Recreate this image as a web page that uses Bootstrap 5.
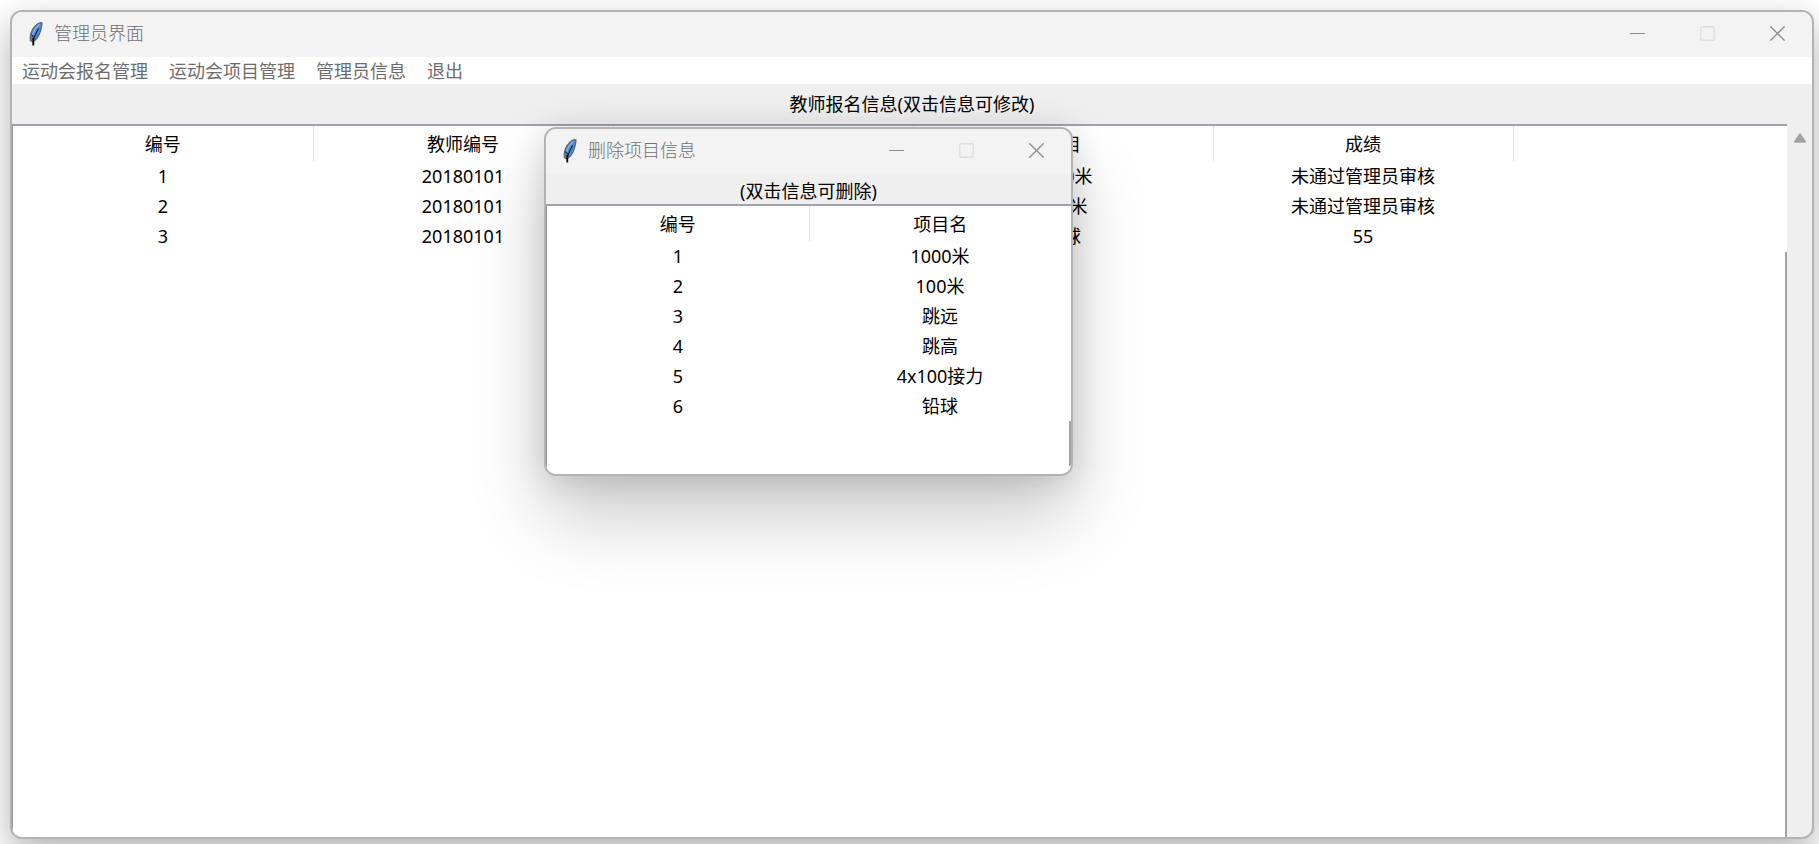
<!DOCTYPE html>
<html lang="zh-CN">
<head>
<meta charset="utf-8">
<meta name="viewport" content="width=device-width, initial-scale=1">
<title>管理员界面</title>
<link href="https://cdn.jsdelivr.net/npm/bootstrap@5.3.0/dist/css/bootstrap.min.css" rel="stylesheet">
<style>
  body {
    font-family: "Noto Sans", "Noto Sans CJK SC", sans-serif;
    font-size: 18px;
    line-height: 30px;
    color: #000;
    background: #fff;
  }
  .desktop { padding: 10px 5px 5px 10px; overflow: hidden; }
  .app-window {
    border: 2px solid #b3b3b3;
    border-radius: 12px;
    background: #efefef;
  }
  .main-window { box-shadow: 0 14px 36px rgba(0, 0, 0, .3); }
  .dialog-window {
    position: absolute;
    left: 544px;
    top: 127px;
    width: 529px;
    height: 349px;
    box-shadow: 0 42px 76px rgba(0, 0, 0, .2), 0 4px 32px rgba(0, 0, 0, .14);
  }
  .window-body { border-radius: 0 0 10px 10px; overflow: hidden; }
  .titlebar {
    height: 45px;
    padding: 0 0 2px 17px;
    background: #f3f3f3;
    border-radius: 10px 10px 0 0;
  }
  .window-title { font-size: 18px; line-height: 28px; font-weight: 300; color: #707070; margin-left: 11px; padding-bottom: 2px; }
  .caption-btn { width: 70px; height: 43px; border: 0; padding: 0; background: transparent; color: #8c8c8c; }
  .caption-btn:disabled { color: #dedede; }
  .caption-btn svg { display: block; margin: auto; }
  .menu-strip { height: 27px; padding: 0 10px; gap: 21px; background: #fff; }
  .menu-strip a { color: #6d6d6d; line-height: 28px; text-decoration: none; }
  .main-caption { height: 40px; line-height: 40px; }
  .dialog-caption { height: 30px; line-height: 35px; }
  .tree-view {
    border-top: 2px solid #a0a3aa;
    border-left: 1px solid #8f949c;
    background: #fff;
    position: relative;
  }
  .tree-edge { position: absolute; right: 0; bottom: 0; width: 2px; background: #a0a3aa; }
  .main-window .tree-edge { top: 126px; }
  .dialog-window .tree-edge { top: 215px; bottom: 8px; }
  .tree-view table { table-layout: fixed; width: 100%; text-align: center; }
  .tree-view th { height: 35px; padding: 0; font-weight: 400; border-right: 1px solid #e2e2e2; }
  .tree-view th:last-child { border-right: 0; }
  .tree-view td { height: 30px; padding: 0; line-height: 30px; }
  .field-col { width: 300px; }
  .scroll-strip { width: 25px; padding-top: 9px; }
  .scroll-strip button { border: 0; padding: 0; background: transparent; line-height: 0; }
</style>
<script src="https://cdn.jsdelivr.net/npm/bootstrap@5.3.0/dist/js/bootstrap.bundle.min.js"></script>
</head>
<body>
<svg class="d-none" aria-hidden="true">
  <symbol id="feather" viewBox="0 0 14 24">
    <path d="M11.500 .7C8 1.500 3.500 6 2 11c-.9 3-1 5.500-.6 7.500l2.300 1.300c3-1.500 6-5.500 7.300-9.300C12.300 6.500 13 3 13 1z" fill="#4a8ad8" stroke="#5f656b" stroke-width="1.200"/>
    <path d="M10.500 2.500C7 5 4.500 9 3.500 14" fill="none" stroke="#8bb8ec" stroke-width="1.300"/>
    <path d="M9.500 6.500C7.500 10 5.500 14 4.300 18M2.500 12.500l2.500 3" fill="none" stroke="#10192a" stroke-width="1.100"/>
    <path d="M4.300 16V23.500" stroke="#000" stroke-width="1.800"/>
  </symbol>
  <symbol id="minimize" viewBox="0 0 15 15"><path d="M0 7.500h15" stroke="currentColor"/></symbol>
  <symbol id="maximize" viewBox="0 0 15 15"><rect x=".75" y=".75" width="13.500" height="13.500" rx="1" fill="none" stroke="currentColor" stroke-width="1.300"/></symbol>
  <symbol id="close" viewBox="0 0 15 15"><path d="M.3 .3l14.400 14.400M14.700 .3L.3 14.700" stroke="currentColor" stroke-width="1.300"/></symbol>
</svg>

<main class="desktop min-vh-100 d-flex position-relative">
  <section class="app-window main-window flex-grow-1 d-flex flex-column" aria-label="管理员界面">
    <header class="titlebar d-flex align-items-center">
      <svg width="14" height="24" aria-hidden="true"><use href="#feather"/></svg>
      <h1 class="window-title mb-0 me-auto">管理员界面</h1>
      <button type="button" class="caption-btn" aria-label="最小化"><svg width="15" height="15"><use href="#minimize"/></svg></button>
      <button type="button" class="caption-btn" aria-label="最大化" disabled><svg width="15" height="15"><use href="#maximize"/></svg></button>
      <button type="button" class="caption-btn" aria-label="关闭"><svg width="15" height="15"><use href="#close"/></svg></button>
    </header>
    <nav class="menu-strip d-flex align-items-center">
      <a href="#">运动会报名管理</a>
      <a href="#">运动会项目管理</a>
      <a href="#">管理员信息</a>
      <a href="#">退出</a>
    </nav>
    <div class="window-body flex-grow-1 d-flex flex-column">
      <div class="main-caption text-center">教师报名信息(双击信息可修改)</div>
      <div class="d-flex flex-grow-1">
        <div class="tree-view flex-grow-1">
          <table>
            <colgroup><col class="field-col"><col class="field-col"><col class="field-col"><col class="field-col"><col class="field-col"><col></colgroup>
            <thead><tr><th>编号</th><th>教师编号</th><th></th><th>项目</th><th>成绩</th><th></th></tr></thead>
            <tbody>
              <tr><td>1</td><td>20180101</td><td></td><td>1000米</td><td>未通过管理员审核</td><td></td></tr>
              <tr><td>2</td><td>20180101</td><td></td><td>100米</td><td>未通过管理员审核</td><td></td></tr>
              <tr><td>3</td><td>20180101</td><td></td><td>铅球</td><td>55</td><td></td></tr>
            </tbody>
          </table>
          <div class="tree-edge"></div>
        </div>
        <div class="scroll-strip flex-shrink-0">
          <button type="button" class="d-block mx-auto" aria-label="向上滚动"><svg width="12" height="10" viewBox="0 0 12 10"><path d="M6 1.200L11 8.800H1z" fill="#a3a3a3" stroke="#a3a3a3" stroke-width="2" stroke-linejoin="round"/></svg></button>
        </div>
      </div>
    </div>
  </section>

  <section class="app-window dialog-window d-flex flex-column" role="dialog" aria-label="删除项目信息">
    <header class="titlebar d-flex align-items-center">
      <svg width="14" height="24" aria-hidden="true"><use href="#feather"/></svg>
      <h2 class="window-title mb-0 me-auto">删除项目信息</h2>
      <button type="button" class="caption-btn" aria-label="最小化"><svg width="15" height="15"><use href="#minimize"/></svg></button>
      <button type="button" class="caption-btn" aria-label="最大化" disabled><svg width="15" height="15"><use href="#maximize"/></svg></button>
      <button type="button" class="caption-btn" aria-label="关闭"><svg width="15" height="15"><use href="#close"/></svg></button>
    </header>
    <div class="window-body flex-grow-1 d-flex flex-column">
      <div class="dialog-caption text-center">(双击信息可删除)</div>
      <div class="tree-view flex-grow-1">
        <table>
          <thead><tr><th>编号</th><th>项目名</th></tr></thead>
          <tbody>
            <tr><td>1</td><td>1000米</td></tr>
            <tr><td>2</td><td>100米</td></tr>
            <tr><td>3</td><td>跳远</td></tr>
            <tr><td>4</td><td>跳高</td></tr>
            <tr><td>5</td><td>4x100接力</td></tr>
            <tr><td>6</td><td>铅球</td></tr>
          </tbody>
        </table>
        <div class="tree-edge"></div>
      </div>
    </div>
  </section>
</main>
</body>
</html>
